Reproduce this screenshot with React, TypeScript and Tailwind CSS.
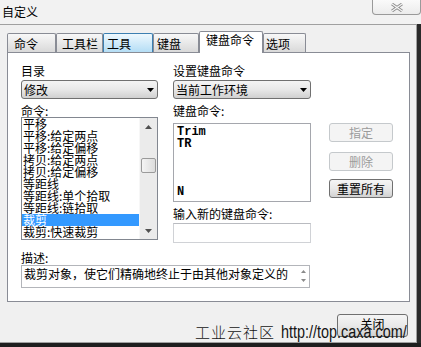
import React from "react";

function Tri({ dir, color = "#000", w = 7, h = 4 }: { dir: "up" | "down"; color?: string; w?: number; h?: number }) {
  return (
    <svg width={w} height={h} viewBox={`0 0 ${w} ${h}`} className="block">
      {dir === "down" ? (
        <path d={`M0 0H${w}L${w / 2} ${h}Z`} fill={color} />
      ) : (
        <path d={`M0 ${h}H${w}L${w / 2} 0Z`} fill={color} />
      )}
    </svg>
  );
}

function Select({ text }: { text: string }) {
  return (
    <div className="mt-[3px] h-[19px] border border-[#707070] rounded-[3px] bg-linear-to-b from-[#f4f4f4] via-[#e8e8e8] to-[#d0d0d0] flex items-center justify-between pl-[2px] pr-[3px]">
      <span className="text-[12px] leading-[13px]">{text}</span>
      <Tri dir="down" />
    </div>
  );
}

function Btn({ label, disabled, cls }: { label: string; disabled?: boolean; cls: string }) {
  return (
    <div
      className={`${cls} h-[19px] rounded-[3px] border flex items-center justify-center text-[12px] leading-[13px] ${
        disabled
          ? "border-[#c5c9cc] bg-[#f4f4f4] text-[#9b9b9b]"
          : "border-[#707070] bg-linear-to-b from-[#f5f5f5] via-[#e9e9e9] to-[#d2d2d2] text-black"
      }`}
    >
      {label}
    </div>
  );
}

const tabs = [
  { label: "命令", cls: "w-[49px] pl-[6px]", state: "normal" },
  { label: "工具栏", cls: "w-[47px] pl-[5px]", state: "normal" },
  { label: "工具", cls: "w-[50px] pl-[3px]", state: "hover" },
  { label: "键盘", cls: "w-[46px] pl-[3px]", state: "normal" },
  { label: "键盘命令", cls: "w-[64px] pl-[6px]", state: "selected" },
  { label: "选项", cls: "w-[43px] pl-[2px]", state: "normal" },
];

const items = [
  "平移",
  "平移:给定两点",
  "平移:给定偏移",
  "拷贝:给定两点",
  "拷贝:给定偏移",
  "等距线",
  "等距线:单个拾取",
  "等距线:链拾取",
  "裁剪",
  "裁剪:快速裁剪",
];

export default function App() {
  return (
    <div className="w-[421px] h-[347px] bg-[#f0f0f0] flex flex-col overflow-hidden text-black text-[12px] leading-[13px] font-['Noto_Sans_CJK_SC',sans-serif]">
      {/* title bar */}
      <div className="h-[24px] flex justify-between items-start bg-[#f2f2f2]">
        <div className="ml-[2px] mt-[5px] h-[13px]">自定义</div>
        <div className="w-[49px] h-[15px] border border-t-0 border-[#9a9a9a] rounded-b-[4px] bg-linear-to-b from-[#fafafa] to-[#ececec] flex items-center justify-center">
          <svg width="14" height="9" viewBox="0 0 14 9">
            <path d="M2 1 L12 8 M12 1 L2 8" stroke="#8c8c8c" strokeWidth="3" />
            <path d="M2 1 L12 8 M12 1 L2 8" stroke="#f6f6f6" strokeWidth="1.2" />
          </svg>
        </div>
      </div>

      {/* body */}
      <div className="flex-1 flex">
        <div className="w-[417px] border-t border-r border-b border-[#a0a0a0] flex flex-col pt-[6px]">
          {/* tabs */}
          <div className="flex items-end h-[21px] ml-[7px]">
            {tabs.map((t) => (
              <div
                key={t.label}
                className={`${t.cls} whitespace-nowrap border border-b-0 rounded-t-[2px] ${
                  t.state === "selected"
                    ? "h-[22px] -mb-px relative z-10 border-[#898c95] bg-white pt-[1px]"
                    : t.state === "hover"
                    ? "h-[19px] border-[#3c7fb1] bg-linear-to-b from-[#eef8fe] to-[#b4ddf5] pt-[3px]"
                    : "h-[19px] border-[#898c95] bg-linear-to-b from-[#f8f8f8] to-[#d9d9d9] pt-[3px]"
                }`}
              >
                {t.label}
              </div>
            ))}
          </div>

          {/* panel */}
          <div className="ml-[7px] w-[403px] h-[250px] border border-[#898c95] bg-white flex flex-col pl-[13px] pt-[11px]">
            <div className="flex items-start">
              {/* left column */}
              <div className="w-[137px] flex flex-col">
                <div className="h-[13px]">目录</div>
                <Select text="修改" />
                <div className="mt-[5px] h-[13px]">命令:</div>
                <div className="h-[123px] border border-[#828790] flex">
                  <div className="w-[117px] flex flex-col overflow-hidden">
                    {items.map((it) => (
                      <div
                        key={it}
                        className={`h-[12px] leading-[12px] pl-[1px] whitespace-nowrap shrink-0 ${
                          it === "裁剪" ? "bg-[#3399ff] text-white" : ""
                        }`}
                      >
                        {it}
                      </div>
                    ))}
                  </div>
                  <div className="w-[18px] bg-[#ebebeb] border-l border-[#f7f7f7] flex flex-col items-center">
                    <div className="h-[17px] flex items-center justify-center">
                      <Tri dir="up" color="#505050" />
                    </div>
                    <div className="mt-[23px] w-[15px] h-[15px] rounded-[2px] border border-[#9a9a9a] bg-linear-to-r from-[#f4f4f4] to-[#dcdcdc]" />
                    <div className="flex-1" />
                    <div className="h-[17px] flex items-center justify-center">
                      <Tri dir="down" color="#505050" />
                    </div>
                  </div>
                </div>
              </div>

              {/* right column */}
              <div className="ml-[15px] w-[138px] flex flex-col">
                <div className="h-[13px]">设置键盘命令</div>
                <Select text="当前工作环境" />
                <div className="mt-[5px] h-[13px]">键盘命令:</div>
                <div className="mt-[6px] h-[79px] border border-[#a5a7ad] pl-[3px] pt-[2px] font-['Liberation_Mono',monospace] font-bold text-[12px] leading-[12px] whitespace-pre">
                  {"Trim\nTR\n\n\n\nN"}
                </div>
                <div className="mt-[5px] h-[13px]">输入新的键盘命令:</div>
                <div className="mt-[3px] h-[20px] border border-[#d0d2d6] border-t-[#b9bbc0]" />
              </div>

              {/* buttons */}
              <div className="ml-[18px] w-[64px] mt-[59px] flex flex-col">
                <Btn label="指定" disabled cls="" />
                <Btn label="删除" disabled cls="mt-[10px]" />
                <Btn label="重置所有" cls="mt-[8px]" />
              </div>
            </div>

            <div className="mt-[8px] h-[13px]">描述:</div>
            <div className="mt-[1px] w-[289px] h-[23px] border border-[#b3b5ba] flex items-start justify-between pl-[2px] pt-[1px]">
              <span className="whitespace-nowrap">裁剪对象，使它们精确地终止于由其他对象定义的</span>
              <div className="mr-[3px] mt-[3px] flex flex-col gap-[6px]">
                <Tri dir="up" color="#8a8a8a" w={5} h={3} />
                <Tri dir="down" color="#8a8a8a" w={5} h={3} />
              </div>
            </div>
          </div>

          {/* bottom area */}
          <div className="relative flex-1 flex justify-end pr-[8px] pt-[12px]">
            <div className="w-[71px] h-[23px] rounded-[3px] border border-[#707070] bg-linear-to-b from-[#f5f5f5] via-[#e9e9e9] to-[#d2d2d2] flex justify-center pt-[2px]">
              关闭
            </div>
            <div className="absolute right-[8px] bottom-[0px] flex items-end whitespace-nowrap text-[#141414]">
              <span className="text-[15px] leading-[20px] font-light tracking-[1px]">工业云社区</span>
              <span className="ml-[6px] inline-block w-[127px] text-[18px] leading-[20px] font-['Liberation_Sans',sans-serif]">
                <span className="inline-block origin-left scale-x-[0.8]">http://top.caxa.com/</span>
              </span>
            </div>
          </div>
        </div>
        <div className="w-[4px] bg-[#2a2a2a]" />
      </div>
      <div className="h-[4px] bg-[#1e1e1e]" />
    </div>
  );
}
